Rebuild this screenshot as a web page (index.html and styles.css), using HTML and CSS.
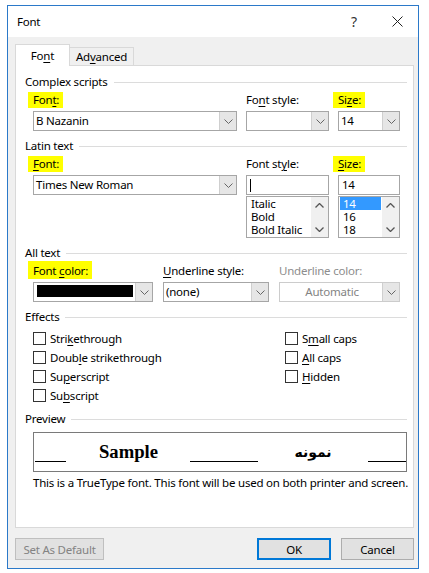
FILE: index.html
```html
<!DOCTYPE html>
<html lang="en">

<head>
    <meta charset="UTF-8">
    <meta name="viewport" content="width=device-width, initial-scale=1.0">
    <title>Font</title>
    <link rel="stylesheet" href="styles.css">
</head>

<body>
    <div class="dialog">
        <div class="titlebar">
            <span class="title">Font</span>
            <span class="help">?</span>
            <span class="close">
                <svg width="11" height="11" viewBox="0 0 11 11"><path d="M0.5 0.5 L10.5 10.5 M10.5 0.5 L0.5 10.5" stroke="#222" stroke-width="1" fill="none"/></svg>
            </span>
        </div>

        <div class="content">
            <div class="tabs">
                <div class="tab tab-active">Fo<u>n</u>t</div>
                <div class="tab tab-plain">Ad<u>v</u>anced</div>
                <div class="tab-fill"></div>
            </div>

            <div class="panel">
                <!-- Complex scripts -->
                <div class="group-title">Complex scripts</div>
                <div class="field-row font-grid">
                    <div>
                        <div class="lbl"><span class="hl">Fon<u>t</u>:</span></div>
                        <div class="combo"><span class="combo-text">B Nazanin</span><span class="combo-btn"><svg width="9" height="5" viewBox="0 0 9 5"><path d="M0.5 0.5 L4.5 4.5 L8.5 0.5" stroke="#666" fill="none"/></svg></span></div>
                    </div>
                    <div>
                        <div class="lbl">Fo<u>n</u>t style:</div>
                        <div class="combo"><span class="combo-text"></span><span class="combo-btn"><svg width="9" height="5" viewBox="0 0 9 5"><path d="M0.5 0.5 L4.5 4.5 L8.5 0.5" stroke="#666" fill="none"/></svg></span></div>
                    </div>
                    <div>
                        <div class="lbl"><span class="hl">Si<u>z</u>e:</span></div>
                        <div class="combo"><span class="combo-text">14</span><span class="combo-btn"><svg width="9" height="5" viewBox="0 0 9 5"><path d="M0.5 0.5 L4.5 4.5 L8.5 0.5" stroke="#666" fill="none"/></svg></span></div>
                    </div>
                </div>

                <!-- Latin text -->
                <div class="group-title">Latin text</div>
                <div class="field-row font-grid">
                    <div>
                        <div class="lbl"><span class="hl"><u>F</u>ont:</span></div>
                        <div class="combo"><span class="combo-text">Times New Roman</span><span class="combo-btn"><svg width="9" height="5" viewBox="0 0 9 5"><path d="M0.5 0.5 L4.5 4.5 L8.5 0.5" stroke="#666" fill="none"/></svg></span></div>
                    </div>
                    <div>
                        <div class="lbl">Font st<u>y</u>le:</div>
                        <div class="input"><span class="caret"></span></div>
                        <div class="listbox">
                            <div class="list-items">
                                <div class="item">Italic</div>
                                <div class="item">Bold</div>
                                <div class="item">Bold Italic</div>
                            </div>
                            <div class="list-scroll">
                                <svg width="9" height="5" viewBox="0 0 9 5"><path d="M0.5 4.5 L4.5 0.5 L8.5 4.5" stroke="#555" stroke-width="1.3" fill="none"/></svg>
                                <svg width="9" height="5" viewBox="0 0 9 5"><path d="M0.5 0.5 L4.5 4.5 L8.5 0.5" stroke="#555" stroke-width="1.3" fill="none"/></svg>
                            </div>
                        </div>
                    </div>
                    <div>
                        <div class="lbl"><span class="hl"><u>S</u>ize:</span></div>
                        <div class="input">14</div>
                        <div class="listbox">
                            <div class="list-items">
                                <div class="item item-sel">14</div>
                                <div class="item">16</div>
                                <div class="item">18</div>
                            </div>
                            <div class="list-scroll">
                                <svg width="9" height="5" viewBox="0 0 9 5"><path d="M0.5 4.5 L4.5 0.5 L8.5 4.5" stroke="#555" stroke-width="1.3" fill="none"/></svg>
                                <svg width="9" height="5" viewBox="0 0 9 5"><path d="M0.5 0.5 L4.5 4.5 L8.5 0.5" stroke="#555" stroke-width="1.3" fill="none"/></svg>
                            </div>
                        </div>
                    </div>
                </div>

                <!-- All text -->
                <div class="group-title">All text</div>
                <div class="field-row all-grid">
                    <div>
                        <div class="lbl"><span class="hl hl-tall">Font <u>c</u>olor:</span></div>
                        <div class="combo"><span class="combo-text"><span class="swatch"></span></span><span class="combo-btn"><svg width="9" height="5" viewBox="0 0 9 5"><path d="M0.5 0.5 L4.5 4.5 L8.5 0.5" stroke="#666" fill="none"/></svg></span></div>
                    </div>
                    <div>
                        <div class="lbl"><u>U</u>nderline style:</div>
                        <div class="combo"><span class="combo-text">(none)</span><span class="combo-btn"><svg width="9" height="5" viewBox="0 0 9 5"><path d="M0.5 0.5 L4.5 4.5 L8.5 0.5" stroke="#666" fill="none"/></svg></span></div>
                    </div>
                    <div>
                        <div class="lbl lbl-off">Underline color:</div>
                        <div class="combo combo-off"><span class="combo-text">Automatic</span><span class="combo-btn"><svg width="9" height="5" viewBox="0 0 9 5"><path d="M0.5 0.5 L4.5 4.5 L8.5 0.5" stroke="#666" fill="none"/></svg></span></div>
                    </div>
                </div>

                <!-- Effects -->
                <div class="group-title">Effects</div>
                <div class="field-row effects">
                    <div class="effects-col">
                        <div class="check"><span class="box"></span>Stri<u>k</u>ethrough</div>
                        <div class="check"><span class="box"></span>Doub<u>l</u>e strikethrough</div>
                        <div class="check"><span class="box"></span>Su<u>p</u>erscript</div>
                        <div class="check"><span class="box"></span>Su<u>b</u>script</div>
                    </div>
                    <div class="effects-col">
                        <div class="check"><span class="box"></span>S<u>m</u>all caps</div>
                        <div class="check"><span class="box"></span><u>A</u>ll caps</div>
                        <div class="check"><span class="box"></span><u>H</u>idden</div>
                    </div>
                </div>

                <!-- Preview -->
                <div class="group-title group-preview">Preview</div>
                <div class="field-row preview">
                    <div class="cell"><span class="rule rule-1"></span></div>
                    <div class="cell cell-center sample">Sample</div>
                    <div class="cell"><span class="rule rule-2"></span></div>
                    <div class="cell cell-center sample-ar" dir="rtl">نمونه</div>
                    <div class="cell"><span class="rule rule-3"></span></div>
                </div>
                <div class="field-row note">This is a TrueType font. This font will be used on both printer and screen.</div>
            </div>

            <div class="buttons">
                <button class="btn btn-off">Set As Default</button>
                <button class="btn btn-ok">OK</button>
                <button class="btn btn-cancel">Cancel</button>
            </div>
        </div>
    </div>
</body>
</html>
```

FILE: styles.css
```css
* {
    box-sizing: border-box;
}

body {
    margin: 0;
    background: #fff;
    font-family: "Noto Sans", Arial, sans-serif;
    font-size: 11.5px;
    letter-spacing: -0.22px;
    color: #000;
}

u {
    text-decoration-thickness: 1px;
    text-underline-offset: 2px;
}

.dialog {
    margin: 5px 0 0 7px;
    width: 412px;
    height: 564px;
    border: 1px solid #2b79c9;
    background: #f0f0f0;
}

.titlebar {
    height: 31px;
    background: #fff;
    display: flex;
    align-items: center;
    padding-left: 9px;
}

.title {
    flex: 1;
}

.help {
    width: 44px;
    text-align: center;
    font-size: 14px;
    color: #333;
}

.close {
    width: 42px;
    display: flex;
    justify-content: center;
}

.content {
    padding: 7px 4px 0 7px;
}

.tabs {
    display: flex;
    align-items: flex-end;
    height: 22px;
}

.tab {
    text-align: center;
    border: 1px solid #d9d9d9;
}

.tab-active {
    width: 55px;
    height: 22px;
    line-height: 22px;
    background: #fff;
    border-bottom: none;
}

.tab-plain {
    width: 64px;
    height: 19px;
    line-height: 17px;
    border-left: none;
}

.tab-fill {
    flex: 1;
    border-bottom: 1px solid #d9d9d9;
}

.panel {
    width: 399px;
    height: 462px;
    background: #fff;
    border: 1px solid #d9d9d9;
    border-top: none;
    padding: 8px 6px 0 9px;
}

.group-title {
    display: flex;
    align-items: center;
    height: 16px;
    line-height: 16px;
    margin-top: 7px;
}

.group-title:first-child {
    margin-top: 0;
}

.group-title::after {
    content: "";
    flex: 1;
    height: 1px;
    background: #dcdcdc;
    margin-left: 6px;
}

.field-row {
    margin-left: 8px;
}

.font-grid {
    display: grid;
    grid-template-columns: 204px 83px 62px;
    column-gap: 9px;
    margin-top: 2px;
}

.all-grid {
    display: grid;
    grid-template-columns: 120px 106px 121px;
    column-gap: 10px;
    margin-top: 2px;
}

.lbl {
    height: 16px;
    line-height: 16px;
    white-space: nowrap;
}

.lbl-off {
    color: #8d8d8d;
}

.hl {
    display: inline-block;
    background: #ffff00;
    margin-left: -5px;
    padding: 0 4px 0 5px;
}

.hl-tall {
    margin-top: -2px;
    padding-top: 2px;
}

.combo {
    margin-top: 3px;
    height: 20px;
    border: 1px solid #a6a6a6;
    background: #fff;
    display: flex;
}

.combo-text {
    flex: 1;
    padding-left: 2px;
    line-height: 18px;
    white-space: nowrap;
}

.combo-btn {
    width: 17px;
    background: #e6e6e6;
    border-left: 1px solid #cfcfcf;
    display: flex;
    align-items: center;
    justify-content: center;
}

.combo-off {
    border-color: #cccccc;
}

.combo-off .combo-text {
    color: #838383;
    text-align: center;
}

.swatch {
    display: block;
    width: 96px;
    height: 12px;
    margin: 2px 0 0 1px;
    background: #000;
}

.input {
    margin-top: 3px;
    height: 20px;
    border: 1px solid #a6a6a6;
    padding-left: 3px;
    line-height: 18px;
}

.caret {
    display: inline-block;
    width: 1px;
    height: 13px;
    margin-top: 3px;
    vertical-align: top;
    background: #000;
}

.listbox {
    margin-top: 1px;
    height: 42px;
    border: 1px solid #a6a6a6;
    display: flex;
    overflow: hidden;
}

.list-items {
    flex: 1;
    padding: 0 1px;
}

.item {
    height: 13px;
    line-height: 13px;
    padding-left: 3px;
    white-space: nowrap;
}

.item-sel {
    background: #3399ff;
    color: #fff;
}

.list-scroll {
    width: 17px;
    background: #f0f0f0;
    display: flex;
    flex-direction: column;
    justify-content: space-between;
    align-items: center;
    padding: 6px 0 5px;
}

.effects {
    display: flex;
    margin-top: 4px;
}

.effects-col {
    flex: 1;
}

.effects-col:first-child {
    flex: 0 0 252px;
}

.check {
    display: flex;
    align-items: center;
    height: 19px;
    white-space: nowrap;
}

.box {
    width: 13px;
    height: 13px;
    border: 1px solid #333;
    background: #fff;
    margin-right: 4px;
}

.group-preview {
    margin-top: 6px;
}

.preview {
    margin-top: 5px;
    width: 374px;
    height: 40px;
    border: 1px solid #7a7a7a;
    display: grid;
    grid-template-columns: 33px 123px 68px 110px 38px;
    align-items: center;
    letter-spacing: 0;
}

.cell {
    height: 38px;
    display: flex;
    align-items: center;
}

.cell-center {
    justify-content: center;
}

.rule {
    display: block;
    height: 1px;
    background: #000;
    margin-top: 18px;
}

.rule-1 {
    width: 31px;
    margin-left: 1px;
}

.rule-2 {
    width: 68px;
}

.rule-3 {
    width: 38px;
}

.sample {
    font-family: "Liberation Serif", "Times New Roman", serif;
    font-weight: bold;
    font-size: 18.67px;
}

.sample-ar {
    font-family: "DejaVu Sans", sans-serif;
    font-weight: bold;
    font-size: 14px;
}

.note {
    margin-top: 3px;
    line-height: 16px;
    white-space: nowrap;
}

.buttons {
    display: flex;
    width: 399px;
    margin-top: 10px;
}

.btn {
    height: 22px;
    border: 1px solid #adadad;
    background: #e1e1e1;
    font-family: inherit;
    font-size: inherit;
    letter-spacing: inherit;
    color: #000;
    padding: 0;
}

.btn-off {
    width: 89px;
    color: #838383;
    border-color: #bfbfbf;
}

.btn-ok {
    width: 74px;
    margin-left: auto;
    border: 2px solid #0078d7;
}

.btn-cancel {
    width: 73px;
    margin-left: 10px;
}
```
